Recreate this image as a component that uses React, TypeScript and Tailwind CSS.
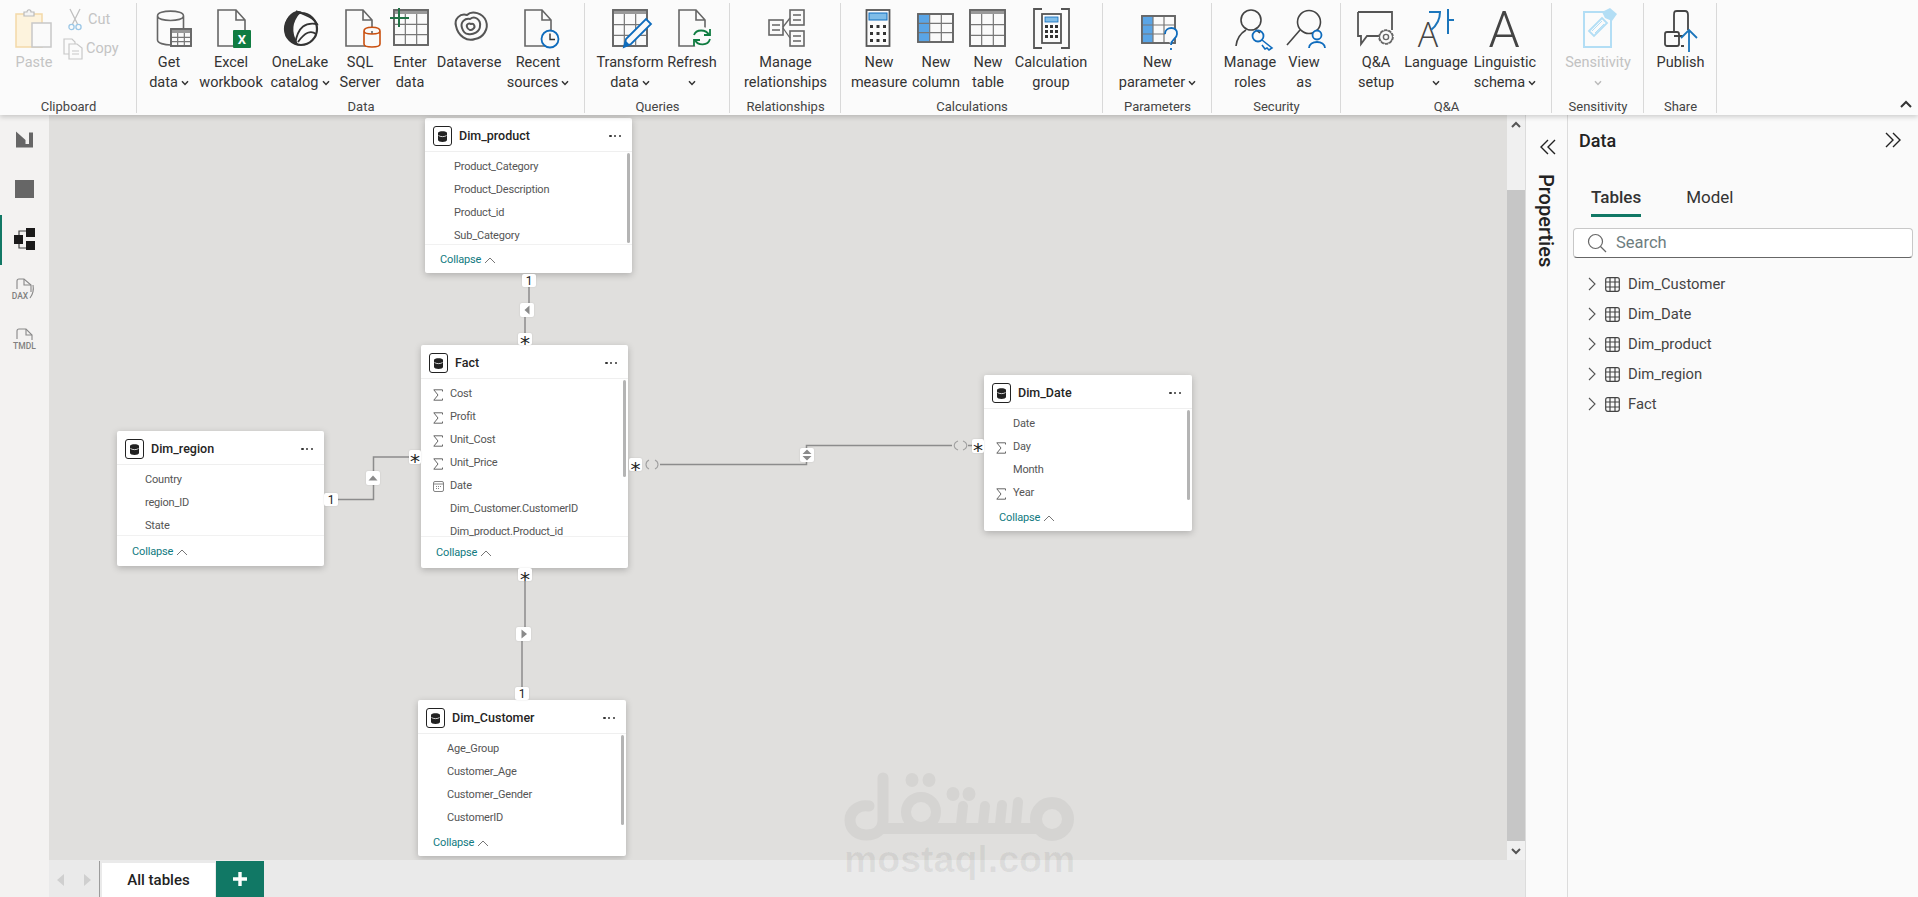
import React from "react";

const S = "#666";

function Box({ children, cls = "" }: { children: React.ReactNode; cls?: string }) {
  return (
    <svg width="44" height="44" viewBox="0 0 44 44" className={"shrink-0 overflow-visible " + cls} fill="none" stroke={S} strokeWidth="1.6">
      {children}
    </svg>
  );
}

const Page = ({ x, y = 4, w = 26, h = 36 }: { x: number; y?: number; w?: number; h?: number }) => (
  <path d={`M${x} ${y}H${x + w - 9}L${x + w} ${y + 10}V${y + h}H${x}Z M${x + w - 9} ${y}V${y + 10}H${x + w}`} fill="#fafafa" />
);

const Grid = ({ x, y, w, h, head, first }: { x: number; y: number; w: number; h: number; head?: boolean; first?: boolean }) => {
  const c = w / 3;
  const r = (h - (head ? 4 : 0)) / 3;
  const t = y + (head ? 4 : 0);
  return (
    <g>
      <rect x={x} y={y} width={w} height={h} fill="#fafafa" />
      {head && <rect x={x} y={y} width={w} height={4} fill="#999" stroke="none" />}
      {first && <rect x={x} y={y} width={c} height={h} fill="#5aa5e6" stroke="none" />}
      <path d={`M${x + c} ${t}V${y + h}M${x + 2 * c} ${t}V${y + h}M${x} ${t + r}H${x + w}M${x} ${t + 2 * r}H${x + w}`} strokeWidth="1.2" stroke="#777" />
      <rect x={x} y={y} width={w} height={h} stroke="#666" strokeWidth="1.8" />
    </g>
  );
};

const icons: Record<string, React.ReactNode> = {
  get: (
    <Box>
      <path d="M10.5 10C10.5 3.5 36.5 3.5 36.5 10V24M10.5 10C10.5 16 36.5 16 36.5 10M10.5 10V34C10.5 37 17 39 24 39" />
      <Grid x={24} y={23} w={20} h={17} head />
    </Box>
  ),
  excel: (
    <Box>
      <Page x={9} w={27} />
      <rect x="24" y="24" width="18" height="18" fill="#107c41" stroke="none" rx="1" />
      <text x="33" y="38" textAnchor="middle" fontSize="13" fontWeight="700" fill="#fff" stroke="none" fontFamily="Roboto, sans-serif">X</text>
    </Box>
  ),
  onelake: (
    <Box>
      <circle cx="23" cy="23" r="16" strokeWidth="2.2" stroke="#333" />
      <path d="M22 6C14 5 6 14 8 24C9 32 13 36 19 38C13 28 12 17 22 6Z" fill="#333" stroke="#333" />
      <path d="M18 5C28 9 36 12 39 18C28 16 20 20 17 38M20 36C27 26 33 24 38 28" strokeWidth="1.8" stroke="#333" />
    </Box>
  ),
  sql: (
    <Box>
      <Page x={8} w={26} />
      <path d="M26 25C26 20 42 20 42 25V38C42 42 26 42 26 38ZM26 25C26 29 42 29 42 25" stroke="#ca5010" fill="#fafafa" />
    </Box>
  ),
  enter: (
    <Box>
      <Grid x={6} y={4} w={34} h={35} head />
      <path d="M2 12H21M11 2V21" stroke="#217346" strokeWidth="2" />
    </Box>
  ),
  dataverse: (
    <Box>
      <path d="M9 20C7 13 13 7 20 9C25 4 36 7 39 15C42 23 36 32 28 33C20 36 11 30 9 20Z" strokeWidth="2" stroke="#555" />
      <path d="M15 22C13 16 18 12 23 13C28 9 34 14 33 20C33 26 26 29 21 28C18 28 16 25 15 22Z" strokeWidth="2" stroke="#555" />
      <path d="M20 21C19 18 22 17 24 18C27 17 29 21 26 23C24 25 21 24 20 21Z" strokeWidth="2" stroke="#555" />
    </Box>
  ),
  recent: (
    <Box>
      <Page x={9} w={26} />
      <circle cx="34" cy="33" r="8.5" stroke="#0f6cbd" strokeWidth="1.8" fill="#fafafa" />
      <path d="M34 27.5V33.5H39" stroke="#333" strokeWidth="1.4" />
    </Box>
  ),
  transform: (
    <Box>
      <Grid x={5} y={4} w={34} h={36} head />
      <path d="M16 41L18 33L38 13L43 18L23 38Z" fill="#fafafa" stroke="#0f6cbd" strokeWidth="1.8" />
      <path d="M16 41L18 35L22 39Z" fill="#0f6cbd" stroke="none" />
    </Box>
  ),
  refresh: (
    <Box>
      <Page x={9} w={26} />
      <circle cx="32" cy="32" r="11" fill="#fafafa" stroke="none" />
      <path d="M24 29C26 23 36 23 39 29M40 33C38 40 28 40 25 34" stroke="#107c41" strokeWidth="1.8" />
      <path d="M40 23V29H34M24 40V34H30" stroke="#107c41" strokeWidth="1.8" />
    </Box>
  ),
  rel: (
    <Box>
      <g fill="#fafafa">
        <rect x="5" y="14" width="14" height="15" />
        <rect x="26" y="4" width="14" height="15" />
        <rect x="26" y="25" width="14" height="15" />
      </g>
      <path d="M8 19H16M8 24H16M29 9H37M29 14H37M29 30H37M29 35H37M19 21L26 12M19 22L26 32" strokeWidth="1.3" />
    </Box>
  ),
  measure: (
    <Box>
      <rect x="9.5" y="4" width="23" height="36" stroke="#555" strokeWidth="1.8" />
      <rect x="12" y="7" width="18" height="7" fill="#7fbde8" stroke="#0f6cbd" strokeWidth="1" />
      <path d="M13 19h3v3h-3zM19.5 19h3v3h-3zM26 19h3v3h-3zM13 26h3v3h-3zM19.5 26h3v3h-3zM26 26h3v3h-3zM13 33h3v3h-3zM19.5 33h3v3h-3zM26 33h3v3h-3z" fill="#333" stroke="none" />
    </Box>
  ),
  column: (
    <Box>
      <Grid x={4} y={8} w={35} h={28} first />
    </Box>
  ),
  table: (
    <Box>
      <Grid x={4} y={4} w={35} h={36} head />
    </Box>
  ),
  calc: (
    <Box>
      <path d="M13 3H5V42H13M32 3H40V42H32" strokeWidth="1.8" stroke="#555" />
      <rect x="13" y="8" width="19" height="29" stroke="#555" strokeWidth="1.8" />
      <rect x="16" y="11" width="13" height="5" fill="#7fbde8" stroke="#0f6cbd" strokeWidth="0.8" />
      <path d="M16 19h3v3h-3zM21 19h3v3h-3zM26 19h3v3h-3zM16 24h3v3h-3zM21 24h3v3h-3zM26 24h3v3h-3zM16 29h3v3h-3zM21 29h3v3h-3zM26 29h3v3h-3z" fill="#333" stroke="none" />
    </Box>
  ),
  param: (
    <Box>
      <Grid x={6} y={10} w={33} h={27} first />
      <path d="M29 28C29 20 42 20 41 28C41 33 35 33 35 39M35 42V44" stroke="#0f6cbd" strokeWidth="1.8" fill="#fafafa" />
    </Box>
  ),
  roles: (
    <Box>
      <circle cx="23" cy="14" r="10" stroke="#444" />
      <path d="M8 40C9 31 13 27 18 24M28 24C30 25 31 26 32 27" stroke="#444" />
      <circle cx="30" cy="30" r="5.5" stroke="#0f6cbd" strokeWidth="1.8" />
      <path d="M34 34L44 42L41 44L39 42L37 43L34 39" stroke="#0f6cbd" strokeWidth="1.6" />
    </Box>
  ),
  view: (
    <Box>
      <circle cx="27" cy="16" r="11.5" stroke="#444" />
      <path d="M5 39L18 24" stroke="#444" />
      <circle cx="35" cy="29" r="4.5" stroke="#0f6cbd" strokeWidth="1.8" fill="#fafafa" />
      <path d="M27 42C27 34 43 34 43 42" stroke="#0f6cbd" strokeWidth="1.8" />
    </Box>
  ),
  qa: (
    <Box>
      <path d="M4 6H38V24M26 30H13L7 38V30H4V6" stroke="#555" strokeWidth="1.8" />
      <circle cx="32" cy="31" r="7" fill="#fafafa" strokeWidth="1.6" strokeDasharray="3.2 1.2" />
      <circle cx="32" cy="31" r="6.5" strokeWidth="1.2" />
      <circle cx="32" cy="31" r="2.6" strokeWidth="1.4" />
    </Box>
  ),
  language: (
    <Box>
      <text x="14" y="41" textAnchor="middle" fontSize="34" fontWeight="300" fill="#444" stroke="none" fontFamily="'Open Sans', sans-serif">A</text>
      <path d="M15 6H26C26 14 22 20 17 24M34 3V28M34 14H40" stroke="#1b75bb" strokeWidth="2" />
    </Box>
  ),
  ling: (
    <Box>
      <text x="21" y="41" textAnchor="middle" fontSize="50" fontWeight="300" fill="#444" stroke="none" fontFamily="Roboto, sans-serif">A</text>
    </Box>
  ),
  sens: (
    <Box>
      <rect x="8" y="6" width="27" height="35" stroke="#b3def5" strokeWidth="2" />
      <path d="M26 6L34 2L41 8L36 15L29 12Z" fill="#b3def5" stroke="none" />
      <path d="M13 25L26 12L31 17L18 30Z" stroke="#b3def5" strokeWidth="1.8" />
      <path d="M16 25L26 15M19 27L28 18" stroke="#b3def5" strokeWidth="1" />
    </Box>
  ),
  publish: (
    <Box>
      <path d="M15 27V9C15 5 16 5 18 5H26C28 5 29 6 29 9V24" stroke="#444" strokeWidth="1.8" />
      <rect x="6" y="26" width="14" height="14" rx="2" stroke="#444" strokeWidth="1.8" fill="#fafafa" />
      <path d="M24 30H15M22 40H25" stroke="#444" strokeWidth="1.8" />
      <path d="M30 46V24M22 32L30 24L38 32" stroke="#1b75bb" strokeWidth="1.8" />
    </Box>
  ),
};

const Chev = ({ dim }: { dim?: boolean }) => (
  <svg width="8" height="6" viewBox="0 0 8 6" className="inline-block" fill="none" stroke={dim ? "#bbb" : "#333"} strokeWidth="1.5">
    <path d="M1 1.2L4 4.4L7 1.2" />
  </svg>
);

type Item = { icon: string; l1: string; l2?: string; chev?: boolean; w: string; dim?: boolean };

function RItem({ icon, l1, l2, chev, w, dim }: Item) {
  return (
    <div className={"flex flex-col items-center h-full shrink-0 whitespace-nowrap " + w + (dim ? " text-[#c2c2c2]" : " text-[#333]")}>
      <div className="h-[44px] mt-[6px] flex justify-center w-[44px]">{icons[icon]}</div>
      <div className="h-[20px] mt-[3px] leading-[20px]">{l1}</div>
      <div className="h-[20px] leading-[20px] flex items-center gap-[3px]">
        {l2 && <span>{l2}</span>}
        {chev && <Chev dim={dim} />}
      </div>
    </div>
  );
}

function Group({ label, w, children, center }: { label: string; w: string; children: React.ReactNode; center?: boolean }) {
  return (
    <div className={"relative shrink-0 flex flex-col h-full " + w}>
      <div className={"flex flex-1 " + (center ? "justify-center" : "")}>{children}</div>
      <div className="h-[17px] text-center text-[13px] leading-[17px] text-[#444] whitespace-nowrap">{label}</div>
      <div className="absolute right-0 top-[3px] bottom-[2px] w-px bg-[#d9d9d9]" />
    </div>
  );
}

function Ribbon() {
  return (
    <div className="relative z-20 h-[115px] shrink-0 bg-[#fbfbfb] shadow-[0_2px_5px_rgba(0,0,0,0.18)] flex text-[14.5px]">
      <Group label="Clipboard" w="w-[137px]">
        <div className="w-[68px] flex flex-col items-center text-[#c4c4c4]">
          <svg width="38" height="40" viewBox="0 0 38 40" className="mt-[9px]" fill="none">
            <rect x="1" y="5" width="26" height="33" fill="#fdf3dd" stroke="#f3d9a8" strokeWidth="1.5" />
            <path d="M9 7V3H12C12 0 16 0 16 3H19V7Z" fill="#f4f4f4" stroke="#bbb" strokeWidth="1.2" />
            <path d="M17 14H36V38H17Z" fill="#fafafa" stroke="#c8c8c8" strokeWidth="1.5" />
          </svg>
          <div className="h-[20px] leading-[20px] mt-[4px]">Paste</div>
        </div>
        <div className="flex flex-col text-[#c4c4c4]">
          <div className="flex items-center h-[36px] mt-[2px] gap-[6px]">
            <svg width="14" height="24" viewBox="0 0 14 24" fill="none" stroke="#c0c0c0" strokeWidth="1.3">
              <path d="M2 1L9.5 16M12 1L4.5 16" />
              <circle cx="3.5" cy="19" r="2.6" stroke="#9cc7e6" />
              <circle cx="10.5" cy="19" r="2.6" stroke="#9cc7e6" />
            </svg>
            <span>Cut</span>
          </div>
          <div className="flex items-center h-[20px] mt-[1px] gap-[3px] -ml-[5px]">
            <svg width="20" height="22" viewBox="0 0 20 22" fill="none" stroke="#c8c8c8" strokeWidth="1.2">
              <path d="M6 16H1V1H9L12 4V6" />
              <path d="M6 6H14L19 10V21H6Z" />
              <path d="M9 13H16M9 16H16" />
            </svg>
            <span>Copy</span>
          </div>
        </div>
      </Group>
      <Group label="Data" w="w-[448px]">
        <RItem icon="get" l1="Get" l2="data" chev w="w-[64px]" />
        <RItem icon="excel" l1="Excel" l2="workbook" w="w-[60px]" />
        <RItem icon="onelake" l1="OneLake" l2="catalog" chev w="w-[78px]" />
        <RItem icon="sql" l1="SQL" l2="Server" w="w-[42px]" />
        <RItem icon="enter" l1="Enter" l2="data" w="w-[58px]" />
        <RItem icon="dataverse" l1="Dataverse" w="w-[60px]" />
        <RItem icon="recent" l1="Recent" l2="sources" chev w="w-[78px]" />
      </Group>
      <Group label="Queries" w="w-[145px]">
        <RItem icon="transform" l1="Transform" l2="data" chev w="w-[90px]" />
        <RItem icon="refresh" l1="Refresh" chev w="w-[34px]" />
      </Group>
      <Group label="Relationships" w="w-[111px]" center>
        <RItem icon="rel" l1="Manage" l2="relationships" w="w-[90px]" />
      </Group>
      <Group label="Calculations" w="w-[262px]">
        <RItem icon="measure" l1="New" l2="measure" w="w-[76px]" />
        <RItem icon="column" l1="New" l2="column" w="w-[38px]" />
        <RItem icon="table" l1="New" l2="table" w="w-[66px]" />
        <RItem icon="calc" l1="Calculation" l2="group" w="w-[60px]" />
      </Group>
      <Group label="Parameters" w="w-[109px]" center>
        <RItem icon="param" l1="New" l2="parameter" chev w="w-[90px]" />
      </Group>
      <Group label="Security" w="w-[129px]">
        <RItem icon="roles" l1="Manage" l2="roles" w="w-[76px]" />
        <RItem icon="view" l1="View" l2="as" w="w-[32px]" />
      </Group>
      <Group label="Q&A" w="w-[211px]">
        <RItem icon="qa" l1="Q&A" l2="setup" w="w-[70px]" />
        <RItem icon="language" l1="Language" chev w="w-[50px]" />
        <RItem icon="ling" l1="Linguistic" l2="schema" chev w="w-[88px]" />
      </Group>
      <Group label="Sensitivity" w="w-[92px]" center>
        <RItem icon="sens" l1="Sensitivity" chev dim w="w-[80px]" />
      </Group>
      <Group label="Share" w="w-[73px]" center>
        <RItem icon="publish" l1="Publish" w="w-[60px]" />
      </Group>
      <div className="absolute right-[6px] top-[100px]">
        <svg width="12" height="8" viewBox="0 0 12 8" fill="none" stroke="#333" strokeWidth="2">
          <path d="M1 7L6 2L11 7" />
        </svg>
      </div>
    </div>
  );
}

function LeftNav() {
  return (
    <div className="w-[49px] shrink-0 bg-[#f3f2f1] flex flex-col items-center relative">
      <svg width="49" height="260" viewBox="0 115 49 260" fill="none">
        <path d="M16 131.5L25.5 140V144H29V132.5H33V147.5H16Z" fill="#666" />
        <rect x="15" y="180" width="19" height="18" fill="#666" />
        <rect x="14" y="235" width="9" height="9" fill="#1a1a1a" />
        <rect x="26" y="228" width="9" height="9" fill="#1a1a1a" />
        <rect x="26" y="241" width="9" height="9" fill="#1a1a1a" />
        <path d="M19 235V231H26M19 244V248H26" stroke="#444" strokeWidth="1.2" />
        <path d="M17 289V281C17 280 18 279 19 279H24L31 285V292" stroke="#888" strokeWidth="1.1" />
        <path d="M24 279V285H31M33 285C34 290 33 294 30 298" stroke="#888" strokeWidth="1.1" />
        <text x="20" y="299" textAnchor="middle" fontSize="8.5" fontWeight="500" fill="#808080" fontFamily="Roboto, sans-serif">DAX</text>
        <path d="M17 339V331C17 330 18 329 19 329H26L32 335V340" stroke="#888" strokeWidth="1.1" />
        <path d="M26 329V335H32" stroke="#888" strokeWidth="1.1" />
        <text x="24.5" y="349" textAnchor="middle" fontSize="8.5" fontWeight="500" fill="#808080" fontFamily="Roboto, sans-serif">TMDL</text>
      </svg>
      <div className="absolute left-0 top-[100px] w-[2px] h-[50px] bg-[#117865]" />
    </div>
  );
}

const Sigma = () => (
  <svg width="10" height="12" viewBox="0 0 10 12" fill="none" stroke="#666" strokeWidth="1">
    <path d="M9.5 2.5V0.8H0.8L5 6L0.8 11.2H9.5V9.5" />
  </svg>
);

const Cal = () => (
  <svg width="11" height="11" viewBox="0 0 11 11" fill="none" stroke="#777" strokeWidth="0.9">
    <rect x="0.5" y="0.5" width="10" height="10" rx="1.5" />
    <path d="M0.5 3H10.5M3 5.5H4M5 5.5H6M7 5.5H8M3 7.5H4M5 7.5H6" />
  </svg>
);

const Db = () => (
  <div className="w-[19px] h-[20px] rounded-[3px] border-[1.5px] border-[#222] flex items-center justify-center shrink-0">
    <svg width="9" height="11" viewBox="0 0 9 11">
      <path d="M0 2C0 -0.5 9 -0.5 9 2V9C9 11.5 0 11.5 0 9Z" fill="#222" />
      <path d="M0.5 4.5C2 6 7 6 8.5 4.5" stroke="#fff" strokeWidth="0.8" fill="none" />
    </svg>
  </div>
);

type Row = [string, ("s" | "c")?];

function Card({ title, rows, pos, body, thumb, footLine, pad }: { title: string; rows: Row[]; pos: string; body: string; thumb?: string; footLine?: boolean; pad: string }) {
  return (
    <div className={"absolute bg-white rounded-[2px] shadow-[0_2px_7px_rgba(0,0,0,0.22)] flex flex-col " + pos}>
      <div className="h-[34px] shrink-0 flex items-center border-b border-[#efefef] pt-[3px] pl-[8px] pr-[11px] gap-[7px]">
        <Db />
        <div className="flex-1 text-[12.5px] font-medium text-[#252423]">{title}</div>
        <div className="flex gap-[2.5px]">
          <i className="w-[2.2px] h-[2.2px] rounded-full bg-[#333]" />
          <i className="w-[2.2px] h-[2.2px] rounded-full bg-[#333]" />
          <i className="w-[2.2px] h-[2.2px] rounded-full bg-[#333]" />
        </div>
      </div>
      <div className={"relative overflow-hidden pt-[4px] shrink-0 " + body + (footLine ? " border-b border-[#f1f1f1]" : "")}>
        {rows.map(([t, k]) => (
          <div key={t} className="h-[23px] flex items-center relative text-[11px] tracking-[-0.2px] text-[#555] whitespace-nowrap">
            {k && <span className="absolute left-[12px] top-[6px]">{k === "s" ? <Sigma /> : <Cal />}</span>}
            <span className={pad}>{t}</span>
          </div>
        ))}
        {thumb && <div className={"absolute right-[2px] top-[1px] w-[3.5px] rounded-full bg-[#b4b4b4] " + thumb} />}
      </div>
      <div className="flex-1 flex items-center pl-[15px] pt-[2px] gap-[3px] text-[11px] tracking-[-0.15px] text-[#117a80]">
        <span>Collapse</span>
        <svg width="12" height="7" viewBox="0 0 12 7" fill="none" stroke="#666" strokeWidth="0.9">
          <path d="M1 6L6 1L11 6" />
        </svg>
      </div>
    </div>
  );
}

function Badge({ pos, children }: { pos: string; children: React.ReactNode }) {
  return (
    <div className={"absolute z-10 bg-white rounded-[2px] flex items-center justify-center text-[#222] shadow-[0_0_2px_rgba(0,0,0,0.12)] " + pos}>{children}</div>
  );
}

const Star = () => (
  <span className="text-[20px] leading-none font-['DejaVu_Sans',sans-serif] translate-y-[4px]">*</span>
);
const One = () => <span className="text-[12px] leading-none">1</span>;

const Tri = ({ d }: { d: string }) => (
  <svg width="14" height="14" viewBox="0 0 14 14">
    <path d={d} fill="#8a8a8a" />
  </svg>
);

function Connectors() {
  return (
    <svg width="1458" height="745" viewBox="49 115 1458 745" className="absolute left-0 top-0" fill="none" stroke="#8c8c8c" strokeWidth="1.5">
      <path d="M529 285V305M525 315V336" />
      <path d="M525 578V630M522 640V690" />
      <path d="M336 499.5H373.5V457H411" />
      <path d="M660 464.5H806.5V445.5H952M968 445.5H974" />
      <g stroke="#a0a0a0" strokeWidth="1.1">
        <path d="M649 460C645 462 645 467 649 469M655 460C659 462 659 467 655 469" />
        <path d="M958 441C953 443 953 448 958 450M963 441C968 443 968 448 963 450" />
      </g>
    </svg>
  );
}

function Watermark() {
  const c = "#d5d4d2";
  return (
    <div className="absolute left-[795px] top-[655px] w-[240px] h-[110px] pointer-events-none z-10">
      <svg width="240" height="72" viewBox="844 770 240 72" fill="none">
        <g stroke={c} strokeWidth="11" strokeLinecap="round">
          <path d="M869 806C858 804 850 812 850 820C850 830 858 835 866 835C876 835 883 830 883 820V778" />
          <circle cx="921" cy="812" r="15" strokeWidth="10" />
          <path d="M961 824L963 806M983 824L985 806M1000 824L1002 805M1016 824L1018 802" strokeWidth="10" />
          <circle cx="1052" cy="819" r="16" strokeWidth="12" />
        </g>
        <rect x="880" y="823" width="158" height="11" fill={c} />
        <g fill={c}>
          <ellipse cx="912" cy="780" rx="6.5" ry="7" />
          <ellipse cx="929" cy="780" rx="6.5" ry="7" />
          <ellipse cx="953" cy="794" rx="6.5" ry="7" />
          <ellipse cx="969" cy="794" rx="6.5" ry="7" />
        </g>
      </svg>
      <div className="absolute left-0 top-[67px] text-[37.5px] leading-[44px] font-bold font-['Liberation_Sans',sans-serif] text-black/[0.06] whitespace-nowrap">mostaql.com</div>
    </div>
  );
}

function Canvas() {
  return (
    <div className="flex-1 relative bg-[#e0dfdd] overflow-hidden">
      <Connectors />
      <Card title="Dim_product" pos="left-[376px] top-[3px] w-[207px] h-[155px]" body="h-[93px]" thumb="h-[90px]" footLine pad="pl-[29px]"
        rows={[["Product_Category"], ["Product_Description"], ["Product_id"], ["Sub_Category"]]} />
      <Card title="Fact" pos="left-[372px] top-[230px] w-[207px] h-[223px]" body="h-[158px]" thumb="h-[97px]" footLine pad="pl-[29px]"
        rows={[["Cost", "s"], ["Profit", "s"], ["Unit_Cost", "s"], ["Unit_Price", "s"], ["Date", "c"], ["Dim_Customer.CustomerID"], ["Dim_product.Product_id"]]} />
      <Card title="Dim_region" pos="left-[68px] top-[316px] w-[207px] h-[135px]" body="h-[71px]" footLine pad="pl-[28px]"
        rows={[["Country"], ["region_ID"], ["State"]]} />
      <Card title="Dim_Date" pos="left-[935px] top-[260px] w-[208px] h-[156px]" body="h-[94px]" thumb="h-[90px]" pad="pl-[29px]"
        rows={[["Date"], ["Day", "s"], ["Month"], ["Year", "s"]]} />
      <Card title="Dim_Customer" pos="left-[369px] top-[585px] w-[208px] h-[156px]" body="h-[94px]" thumb="h-[90px]" pad="pl-[29px]"
        rows={[["Age_Group"], ["Customer_Age"], ["Customer_Gender"], ["CustomerID"]]} />

      <Badge pos="left-[473px] top-[159px] w-[14px] h-[13px]"><One /></Badge>
      <Badge pos="left-[471px] top-[188px] w-[14px] h-[14px]"><Tri d="M9.5 2.5V11.5L4.5 7Z" /></Badge>
      <Badge pos="left-[469px] top-[218px] w-[14px] h-[12px]"><Star /></Badge>

      <Badge pos="left-[469px] top-[453px] w-[14px] h-[13px]"><Star /></Badge>
      <Badge pos="left-[467px] top-[512px] w-[15px] h-[14px]"><Tri d="M4.5 2.5V11.5L10 7Z" /></Badge>
      <Badge pos="left-[466px] top-[572px] w-[14px] h-[13px]"><One /></Badge>

      <Badge pos="left-[275px] top-[378px] w-[14px] h-[13px]"><One /></Badge>
      <Badge pos="left-[317px] top-[356px] w-[14px] h-[14px]"><Tri d="M2.5 9.5H11.5L7 4.5Z" /></Badge>
      <Badge pos="left-[360px] top-[335px] w-[12px] h-[14px]"><Star /></Badge>

      <Badge pos="left-[580px] top-[343px] w-[13px] h-[13px]"><Star /></Badge>
      <Badge pos="left-[751px] top-[333px] w-[14px] h-[14px]"><Tri d="M2.5 6H11.5L7 1.5ZM2.5 8H11.5L7 12.5Z" /></Badge>
      <Badge pos="left-[923px] top-[324px] w-[12px] h-[14px]"><Star /></Badge>
    </div>
  );
}

function ScrollBar() {
  return (
    <div className="w-[18px] shrink-0 bg-[#f0f0f0] flex flex-col">
      <div className="h-[75px] shrink-0 pt-[6px] flex justify-center">
        <svg width="10" height="8" viewBox="0 0 10 8" fill="none" stroke="#555" strokeWidth="2">
          <path d="M1 6L5 2L9 6" />
        </svg>
      </div>
      <div className="flex-1 bg-[#c6c6c6]" />
      <div className="h-[19px] shrink-0 flex items-center justify-center">
        <svg width="10" height="8" viewBox="0 0 10 8" fill="none" stroke="#555" strokeWidth="2">
          <path d="M1 2L5 6L9 2" />
        </svg>
      </div>
    </div>
  );
}

function BottomBar() {
  return (
    <div className="h-[37px] shrink-0 bg-[#eaeaea] flex items-end">
      <div className="w-[50px] h-full flex items-center justify-center gap-[20px] pt-[3px]">
        <svg width="7" height="12" viewBox="0 0 7 12"><path d="M7 0V12L0 6Z" fill="#cfcfcf" /></svg>
        <svg width="7" height="12" viewBox="0 0 7 12"><path d="M0 0V12L7 6Z" fill="#cfcfcf" /></svg>
      </div>
      <div className="w-[1px] h-[36px] bg-[#9c9c9c]" />
      <div className="ml-[2px] w-[113px] h-[34px] bg-white flex items-center justify-center text-[15px] text-[#222] font-medium">All tables</div>
      <div className="ml-[1px] w-[48px] h-[36px] bg-[#117865] flex items-center justify-center">
        <svg width="14" height="14" viewBox="0 0 14 14"><path d="M7 0V14M0 7H14" stroke="#fff" strokeWidth="3.4" /></svg>
      </div>
    </div>
  );
}

function Properties() {
  return (
    <div className="w-[43px] shrink-0 bg-[#fafafa] border-l border-r border-[#dcdcdc] flex flex-col items-center">
      <svg width="16" height="16" viewBox="0 0 16 16" className="mt-[24px] ml-[3px]" fill="none" stroke="#222" strokeWidth="1.4">
        <path d="M8 1L1 8L8 15M15 1L8 8L15 15" />
      </svg>
      <div className="mt-[19px] [writing-mode:vertical-rl] text-[20px] font-medium text-[#222] leading-[22px] ml-[-1px]">Properties</div>
    </div>
  );
}

const tables = ["Dim_Customer", "Dim_Date", "Dim_product", "Dim_region", "Fact"];

function DataPane() {
  return (
    <div className="flex-1 bg-[#fafafa] relative">
      <div className="flex items-center justify-between pl-[11px] pr-[17px] h-[50px]">
        <span className="text-[18px] font-medium text-[#222]">Data</span>
        <svg width="16" height="16" viewBox="0 0 16 16" fill="none" stroke="#222" strokeWidth="1.4">
          <path d="M1 1L8 8L1 15M8 1L15 8L8 15" />
        </svg>
      </div>
      <div className="flex pl-[23px] gap-[45px] mt-[17px] h-[35px]">
        <div className="relative text-[17px] font-medium text-[#333] leading-[30px] h-[35px]">
          Tables
          <div className="absolute left-0 right-0 bottom-0 h-[3px] bg-[#117865]" />
        </div>
        <div className="text-[17px] text-[#333] leading-[30px]">Model</div>
      </div>
      <div className="ml-[5px] mr-[5px] mt-[11px] h-[30px] bg-white rounded-[4px] border border-[#c8c8c8] border-b-[#666] flex items-center pl-[13px] gap-[9px]">
        <svg width="20" height="20" viewBox="0 0 20 20" fill="none" stroke="#666" strokeWidth="1.2">
          <circle cx="8.5" cy="8.5" r="7" />
          <path d="M13.5 13.5L19 19" />
        </svg>
        <span className="text-[16.5px] text-[#6d7d80]">Search</span>
      </div>
      <div className="mt-[11px] flex flex-col">
        {tables.map((t) => (
          <div key={t} className="h-[30px] flex items-center pl-[20px]">
            <svg width="8" height="14" viewBox="0 0 8 14" fill="none" stroke="#555" strokeWidth="1.1">
              <path d="M1 1L7 7L1 13" />
            </svg>
            <svg width="15" height="15" viewBox="0 0 15 15" className="ml-[9px]" fill="none" stroke="#444" strokeWidth="1.2">
              <rect x="0.7" y="0.7" width="13.6" height="13.6" rx="2" />
              <path d="M5 0.7V14.3M10 0.7V14.3M0.7 5H14.3M0.7 10H14.3" />
            </svg>
            <span className="ml-[8px] text-[14.8px] text-[#444]">{t}</span>
          </div>
        ))}
      </div>
    </div>
  );
}

export default function App() {
  return (
    <div className="w-[1918px] h-[897px] flex flex-col overflow-hidden bg-[#fafafa] font-['Roboto',sans-serif]">
      <Ribbon />
      <div className="flex flex-1 min-h-0">
        <LeftNav />
        <div className="w-[1476px] shrink-0 flex flex-col relative">
          <div className="flex flex-1 min-h-0">
            <Canvas />
            <ScrollBar />
          </div>
          <BottomBar />
          <Watermark />
        </div>
        <Properties />
        <DataPane />
      </div>
    </div>
  );
}
